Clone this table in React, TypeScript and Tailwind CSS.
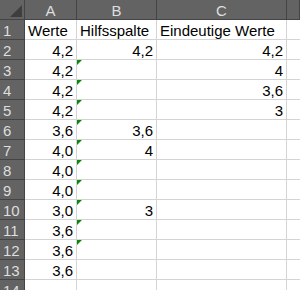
const rows: [string, string, string][] = [
  ["Werte", "Hilfsspalte", "Eindeutige Werte"],
  ["4,2", "4,2", "4,2"],
  ["4,2", "", "4"],
  ["4,2", "", "3,6"],
  ["4,2", "", "3"],
  ["3,6", "3,6", ""],
  ["4,0", "4", ""],
  ["4,0", "", ""],
  ["4,0", "", ""],
  ["3,0", "3", ""],
  ["3,6", "", ""],
  ["3,6", "", ""],
  ["3,6", "", ""],
  ["", "", ""],
];

// rows 3..12 carry the green error marker in column B
const flagged = (n: number) => n >= 3 && n <= 12;

function Tri() {
  return (
    <span className="absolute left-0 top-0 h-0 w-0 border-t-[5px] border-r-[5px] border-t-[#0a8a0a] border-r-transparent" />
  );
}

export default function App() {
  return (
    <div
      className="h-[290px] w-[300px] overflow-hidden bg-white text-[15px] leading-[19px] text-black"
      style={{ fontFamily: '"Liberation Sans", Arial, sans-serif' }}
    >
      <div className="grid grid-cols-[25px_52px_80px_130px_1fr]">
        <div className="relative h-5 border-r border-b border-[#444] bg-[#636363]">
          <span className="absolute right-[2px] bottom-[2px] h-0 w-0 border-b-[12px] border-l-[12px] border-b-[#3e3e3e] border-l-transparent" />
        </div>
        {["A", "B", "C", ""].map((c, i) => (
          <div
            key={i}
            className="h-5 border-r border-b border-[#444] bg-[#636363] pt-px text-center text-[#dedede]"
          >
            {c}
          </div>
        ))}

        {rows.map((r, i) => {
          const n = i + 1;
          const numeric = n > 1;
          return (
            <div key={n} className="contents">
              <div className="h-5 border-r border-b border-[#444] bg-[#636363] pt-px pl-[3px] text-[#dedede]">
                {n}
              </div>
              <div
                className={`h-5 border-r border-b border-[#d4d4d4] pt-px ${numeric ? "pr-[3px] text-right" : "pl-[3px]"}`}
              >
                {r[0]}
              </div>
              <div
                className={`relative h-5 border-r border-b border-[#d4d4d4] pt-px ${numeric ? "pr-[3px] text-right" : "pl-[3px]"}`}
              >
                {flagged(n) && <Tri />}
                {r[1]}
              </div>
              <div
                className={`h-5 border-r border-b border-[#d4d4d4] pt-px ${numeric ? "pr-[3px] text-right" : "pl-[3px]"}`}
              >
                {r[2]}
              </div>
              <div className="h-5 border-b border-[#d4d4d4]" />
            </div>
          );
        })}
      </div>
    </div>
  );
}
